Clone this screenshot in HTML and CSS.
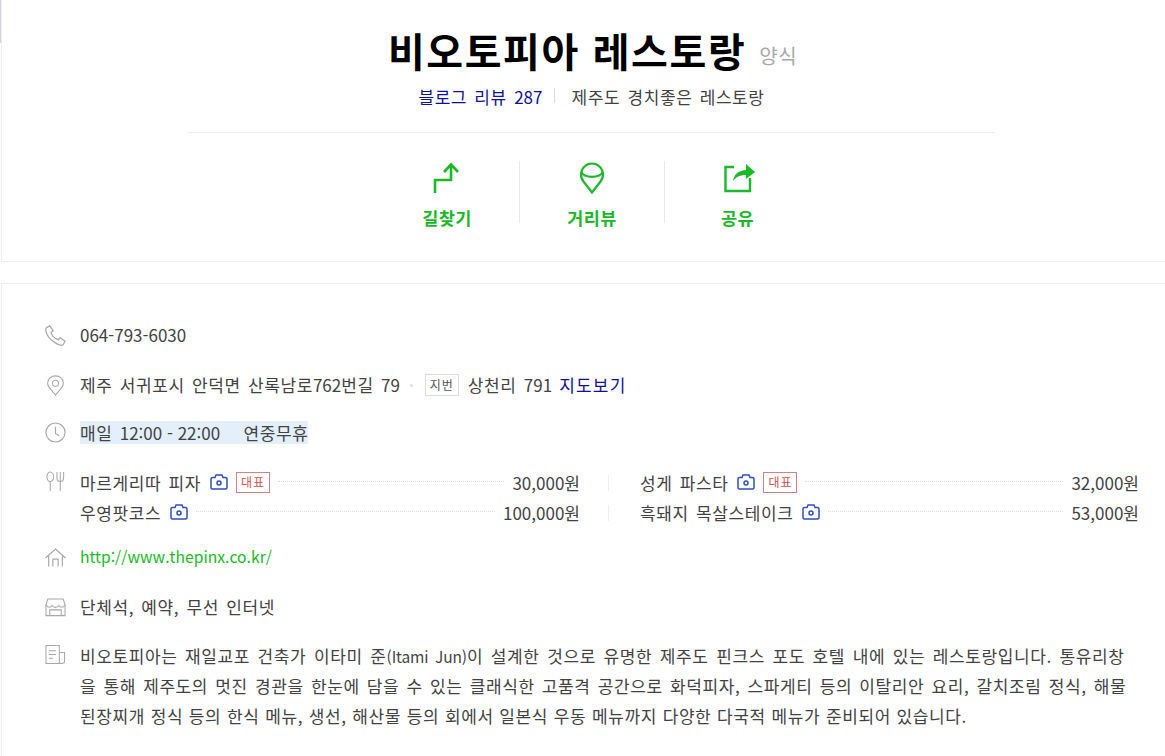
FILE: index.html
```html
<!DOCTYPE html>
<html lang="ko">
<head>
    <meta charset="UTF-8">
    <meta name="viewport" content="width=device-width, initial-scale=1.0">
    <title>비오토피아 레스토랑</title>
    <link rel="stylesheet" href="styles.css">
</head>
<body>
    <div class="page">
        <section class="summary">
            <div class="title-row">
                <h1 class="title">비오토피아 레스토랑</h1>
                <span class="category">양식</span>
            </div>
            <div class="sub-row">
                <a class="blog-link" href="#">블로그 리뷰 <span class="num">287</span></a>
                <span class="tagline">제주도 경치좋은 레스토랑</span>
            </div>
            <div class="actions">
                <a class="action" href="#">
                    <svg class="action-icon" viewBox="0 0 32 32" fill="none" stroke="#19b927" stroke-width="2.6">
                        <path d="M4 32V19H20V4"/>
                        <path d="M13 11L20 3.500L27 11"/>
                    </svg>
                    <span>길찾기</span>
                </a>
                <a class="action" href="#">
                    <svg class="action-icon" viewBox="0 0 32 32" fill="none" stroke="#19b927" stroke-width="2.2">
                        <path d="M16 31.500L7.500 20.500A11 11 0 1 1 24.500 20.500Z"/>
                        <path d="M5 11C9 17.500 23 17.500 27 11"/>
                    </svg>
                    <span>거리뷰</span>
                </a>
                <a class="action" href="#">
                    <svg class="action-icon" viewBox="0 0 32 32" fill="none" stroke="#19b927" stroke-width="2.4">
                        <path d="M12 6H3.500V30H28V17"/>
                        <path d="M11 20C12 13 17 9.500 24 9V3L33 11L24 18V14C18 14 14 16 11 20Z" fill="#19b927" stroke="none"/>
                    </svg>
                    <span>공유</span>
                </a>
            </div>
        </section>

        <section class="details">
            <div class="row row-phone">
                <svg class="row-icon" viewBox="0 0 20 20" fill="none" stroke="#a8a8a8" stroke-width="1.200">
                    <path d="M1.500 2.500L4.500 0.800L7.800 5.300L5.800 7.300C6.500 10 9.500 13 12.500 14L14.500 12L19 15.500L17.500 18.500C16.500 20 13 19.500 9 16.500C4.500 13.500 1.500 9 0.800 5.500C0.600 4.500 0.800 3.300 1.500 2.500Z"/>
                </svg>
                <span class="num">064-793-6030</span>
            </div>
            <div class="row row-address">
                <svg class="row-icon" viewBox="0 0 20 24" fill="none" stroke="#a8a8a8" stroke-width="1.200">
                    <path d="M10 23L3 14.500C1.500 12.800 1 11 1 9.500C1 4.500 5 1 10 1C15 1 19 4.500 19 9.500C19 11 18.500 12.800 17 14.500Z"/>
                    <circle cx="10" cy="9.500" r="3.500"/>
                </svg>
                <span>제주 서귀포시 안덕면 산록남로<span class="num">762</span>번길 <span class="num">79</span></span>
                <span class="dot"></span>
                <span class="lot-tag">지번</span>
                <span>상천리 <span class="num">791</span></span>
                <a class="map-link" href="#">지도보기</a>
            </div>
            <div class="row row-hours">
                <svg class="row-icon" viewBox="0 0 22 22" fill="none" stroke="#a8a8a8" stroke-width="1.200">
                    <circle cx="11" cy="11" r="10"/>
                    <path d="M11 5V12L15 14.500"/>
                </svg>
                <span class="hours">매일 <span class="num">12:00 - 22:00</span> <span class="hours-gap"></span>연중무휴</span>
            </div>
            <div class="row row-menu">
                <svg class="row-icon" viewBox="0 0 20 22" fill="none" stroke="#a8a8a8" stroke-width="1.100">
                    <ellipse cx="4.500" cy="6" rx="3.500" ry="5"/>
                    <path d="M4.500 11V21"/>
                    <path d="M11.500 1V7C11.500 9.500 13 11 15 11C17 11 18.500 9.500 18.500 7V1"/>
                    <path d="M15 1V21"/>
                </svg>
                <div class="menu-grid">
                    <div class="menu-item">
                        <span>마르게리따 피자</span>
                        <svg class="camera" viewBox="0 0 18 16" fill="none" stroke="#2d4fc0" stroke-width="1.500">
                            <path d="M2.500 3.500H5L6 1H12L13 3.500H15.500C16.500 3.500 17 4 17 5V13.500C17 14.500 16.500 15 15.500 15H2.500C1.500 15 1 14.500 1 13.500V5C1 4 1.500 3.500 2.500 3.500Z"/>
                            <circle cx="9" cy="9" r="2"/>
                        </svg>
                        <span class="best-tag">대표</span>
                        <span class="leader"></span>
                        <span class="num">30,000원</span>
                    </div>
                    <div class="menu-item menu-right">
                        <span>성게 파스타</span>
                        <svg class="camera" viewBox="0 0 18 16" fill="none" stroke="#2d4fc0" stroke-width="1.500">
                            <path d="M2.500 3.500H5L6 1H12L13 3.500H15.500C16.500 3.500 17 4 17 5V13.500C17 14.500 16.500 15 15.500 15H2.500C1.500 15 1 14.500 1 13.500V5C1 4 1.500 3.500 2.500 3.500Z"/>
                            <circle cx="9" cy="9" r="2"/>
                        </svg>
                        <span class="best-tag">대표</span>
                        <span class="leader"></span>
                        <span class="num">32,000원</span>
                    </div>
                    <div class="menu-item">
                        <span>우영팟코스</span>
                        <svg class="camera" viewBox="0 0 18 16" fill="none" stroke="#2d4fc0" stroke-width="1.500">
                            <path d="M2.500 3.500H5L6 1H12L13 3.500H15.500C16.500 3.500 17 4 17 5V13.500C17 14.500 16.500 15 15.500 15H2.500C1.500 15 1 14.500 1 13.500V5C1 4 1.500 3.500 2.500 3.500Z"/>
                            <circle cx="9" cy="9" r="2"/>
                        </svg>
                        <span class="leader"></span>
                        <span class="num">100,000원</span>
                    </div>
                    <div class="menu-item menu-right">
                        <span>흑돼지 목살스테이크</span>
                        <svg class="camera" viewBox="0 0 18 16" fill="none" stroke="#2d4fc0" stroke-width="1.500">
                            <path d="M2.500 3.500H5L6 1H12L13 3.500H15.500C16.500 3.500 17 4 17 5V13.500C17 14.500 16.500 15 15.500 15H2.500C1.500 15 1 14.500 1 13.500V5C1 4 1.500 3.500 2.500 3.500Z"/>
                            <circle cx="9" cy="9" r="2"/>
                        </svg>
                        <span class="leader"></span>
                        <span class="num">53,000원</span>
                    </div>
                </div>
            </div>
            <div class="row row-url">
                <svg class="row-icon" viewBox="0 0 20 18" fill="none" stroke="#a8a8a8" stroke-width="1.100">
                    <path d="M0.500 9.500L10 1L19.500 9.500"/>
                    <path d="M3.500 7.500V17.500M16.500 7.500V17.500"/>
                    <path d="M7.500 17.500V10.500H12.500V17.500"/>
                </svg>
                <a class="site-link" href="#">http://www.thepinx.co.kr/</a>
            </div>
            <div class="row row-facility">
                <svg class="row-icon" viewBox="0 0 22 20" fill="none" stroke="#a8a8a8" stroke-width="1.100">
                    <path d="M3 1H19L21 7V18.500H1V7Z"/>
                    <path d="M1 7C3 10.500 6 10.500 7.500 8C9 10.500 13 10.500 14.500 8C16 10.500 19 10.500 21 7"/>
                    <path d="M5 18.500V12.500H17V18.500"/>
                </svg>
                <span>단체석, 예약, 무선 인터넷</span>
            </div>
            <div class="row row-desc">
                <svg class="row-icon" viewBox="0 0 22 20" fill="none" stroke="#a8a8a8" stroke-width="1.100">
                    <path d="M16 19.500H1V0.500H15V19.500C17 19.500 20.500 19.500 20.500 17.500V8H15"/>
                    <path d="M4 6H11.500M4 10H11.500M4 14H8.500"/>
                </svg>
                <p class="desc">비오토피아는 재일교포 건축가 이타미 준<span class="latin">(Itami Jun)</span>이 설계한 것으로 유명한 제주도 핀크스 포도 호텔 내에 있는 레스토랑입니다. 통유리창<br><span class="desc-mid">을 통해 제주도의 멋진 경관을 한눈에 담을 수 있는 클래식한 고품격 공간으로 화덕피자, 스파게티 등의 이탈리안 요리, 갈치조림 정식, 해물</span><br><span class="desc-last">된장찌개 정식 등의 한식 메뉴, 생선, 해산물 등의 회에서 일본식 우동 메뉴까지 다양한 다국적 메뉴가 준비되어 있습니다.</span></p>
            </div>
        </section>
    </div>
</body>
</html>
```

FILE: styles.css
```css
* {
    margin: 0;
    padding: 0;
    box-sizing: border-box;
}

html, body {
    height: 100%;
    overflow: hidden;
}

body {
    background-color: white;
    color: #424242;
    font-family: "Noto Sans CJK KR", "Noto Sans", sans-serif;
    font-size: 17px;
    letter-spacing: 0.6px;
    word-spacing: 1.9px;
}

/* sliver of the outer scrollbar */
body::before {
    content: "";
    position: absolute;
    left: 0;
    top: 0;
    width: 1px;
    height: 43px;
    background-color: #d4d4dc;
}

a {
    text-decoration: none;
}

.num {
    letter-spacing: 0;
    word-spacing: 0;
}

.page {
    width: 1182px;
    margin-left: 1px;
}

/* top card */
.summary {
    height: 262px;
    padding-top: 24px;
    border-left: 1px solid #eeeeee;
    border-bottom: 1px solid #eeeeee;
}

.title-row {
    display: flex;
    justify-content: center;
    align-items: flex-start;
    gap: 13px;
    height: 52px;
}

.title {
    color: black;
    font-size: 40px;
    line-height: 52px;
    font-weight: 700;
    letter-spacing: 1.6px;
    word-spacing: 0;
}

.category {
    margin-top: 17px;
    color: #a8a8a8;
    font-size: 20px;
    line-height: 30px;
    letter-spacing: 0.5px;
}

.sub-row {
    display: flex;
    justify-content: center;
    margin-top: 9px;
    padding-bottom: 23px;
    width: 807px;
    margin-left: 186px;
    border-bottom: 1px solid #eeeeee;
    line-height: 24px;
}

.blog-link {
    color: #10109c;
    padding-right: 13px;
    margin-right: 16px;
    position: relative;
}

.blog-link::after {
    content: "";
    position: absolute;
    right: 0;
    top: 3px;
    height: 15px;
    border-right: 1px solid #dddddd;
}

.actions {
    display: flex;
    justify-content: center;
    margin-top: 28px;
}

.action {
    width: 145px;
    height: 62px;
    display: flex;
    flex-direction: column;
    align-items: center;
    color: #19b927;
    font-size: 17.5px;
    font-weight: 700;
    line-height: 24px;
    letter-spacing: 0.36px;
    border-right: 1px solid #e8e8e8;
}

.action:last-child {
    border-right: none;
}

.action-icon {
    width: 32px;
    height: 32px;
    margin-bottom: 13px;
    flex-shrink: 0;
    overflow: visible;
}

/* bottom card */
.details {
    margin-top: 21px;
    padding-left: 43px;
    padding-bottom: 40px;
    border-left: 1px solid #eeeeee;
    border-top: 1px solid #eeeeee;
    line-height: 30px;
}

.row {
    display: flex;
    align-items: center;
    position: relative;
    padding-left: 35px;
}

.row-icon {
    position: absolute;
    left: 0;
    width: 21px;
    height: 21px;
}

.row-phone {
    margin-top: 36px;
}

.row-address {
    margin-top: 20px;
}

.row-hours {
    margin-top: 21px;
}

.row-menu {
    margin-top: 24px;
    align-items: flex-start;
}

.row-url {
    margin-top: 14px;
}

.row-facility {
    margin-top: 20px;
}

.row-desc {
    margin-top: 19px;
    align-items: flex-start;
}

.row-menu .row-icon, .row-desc .row-icon {
    top: 3px;
}

.dot {
    width: 3px;
    height: 3px;
    margin: 0 12px 0 10px;
    border-radius: 50%;
    background-color: #dddddd;
}

.lot-tag {
    width: 34px;
    height: 22px;
    margin-right: 9px;
    border: 1px solid #dddddd;
    color: #555555;
    font-size: 12px;
    line-height: 19px;
    letter-spacing: 1px;
    text-align: center;
}

.map-link {
    color: #10109c;
    margin-left: 7px;
    letter-spacing: 1.2px;
}

.hours {
    background-color: #e3effb;
    height: 23px;
    line-height: 23px;
}

.hours-gap {
    display: inline-block;
    width: 16px;
}

.menu-grid {
    flex: 1;
    display: grid;
    grid-template-columns: 500px 559px;
}

.menu-item {
    display: flex;
    align-items: center;
}

.menu-right {
    margin-left: 28px;
    padding-left: 32px;
    position: relative;
}

.menu-right::before {
    content: "";
    position: absolute;
    left: 0;
    top: 7px;
    height: 16px;
    border-left: 1px solid #eeeeee;
}

.camera {
    width: 18px;
    height: 16px;
    margin-left: 9px;
    margin-bottom: 2px;
    flex-shrink: 0;
}

.best-tag {
    width: 34px;
    height: 21px;
    margin-left: 8px;
    margin-bottom: 2px;
    border: 1px solid #d98080;
    color: #d05050;
    font-size: 12px;
    line-height: 18px;
    letter-spacing: 1px;
    text-align: center;
}

.leader {
    flex: 1;
    margin: 0 8px 4px;
    border-top: 1px dotted #dddddd;
}

.site-link {
    color: #19b927;
    font-size: 15.7px;
    letter-spacing: 0;
    word-spacing: 0;
}

.desc {
    white-space: nowrap;
    word-spacing: 2.25px;
}

.desc-mid {
    word-spacing: 1.85px;
}

.desc-last {
    word-spacing: 0.35px;
}

.latin {
    font-size: 15.5px;
    letter-spacing: -0.1px;
}
```
